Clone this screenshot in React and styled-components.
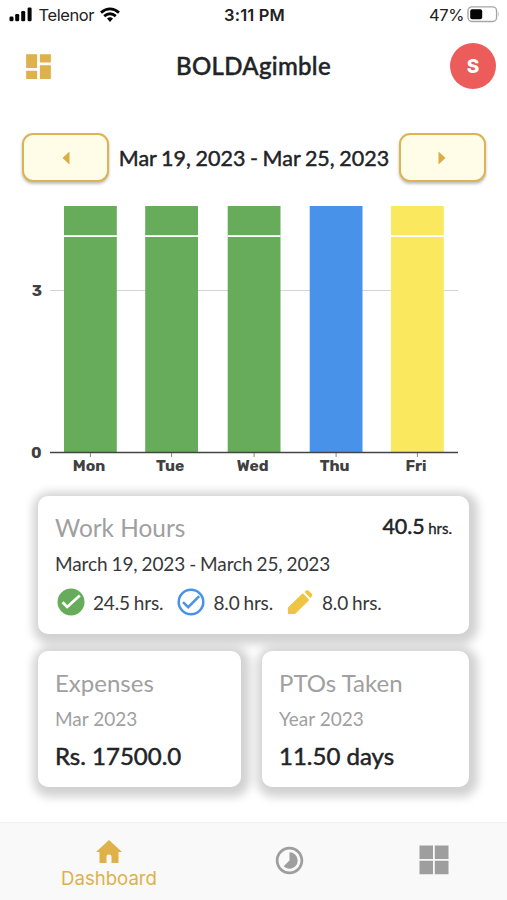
import React from 'react'
import styled, { createGlobalStyle } from "styled-components";
import { MdDashboard, MdTimelapse } from "react-icons/md";

const GlobalStyle = createGlobalStyle`
  * {
    box-sizing: border-box;
  }

  body {
    margin: 0;
    background: white;
    font-family: Lato, "Liberation Sans", sans-serif;
    color: #222326;
  }

  svg {
    display: block;
    flex-shrink: 0;
  }
`;

const Screen = styled.div`
  width: 507px;
  height: 900px;
  display: flex;
  flex-direction: column;
  overflow: hidden;
`;

const StatusBar = styled.div`
  height: 30px;
  padding: 0 7px 0 9px;
  display: grid;
  grid-template-columns: 1fr auto 1fr;
  align-items: center;
  font-family: Inter, sans-serif;
  font-size: 16.5px;
  color: #222;
`;

const StatusGroup = styled.div`
  display: flex;
  align-items: center;
  gap: ${(props) => props.$gap};
  justify-content: ${(props) => (props.$end ? "flex-end" : "flex-start")};
`;

const StatusText = styled.span`
  letter-spacing: -0.4px;
`;

const Clock = styled.span`
  font-weight: 600;
  letter-spacing: 0.15px;
`;

const Header = styled.header`
  height: 72px;
  padding: 0 11px 0 22px;
  display: flex;
  align-items: center;
  justify-content: space-between;
`;

const Title = styled.h1`
  margin: 0 0 0 2px;
  padding-bottom: 1px;
  font-size: 24px;
  font-weight: 500;
  letter-spacing: 0.3px;
  -webkit-text-stroke: 0.45px #222326;
`;

const Avatar = styled.div`
  width: 46px;
  height: 46px;
  border-radius: 50%;
  background: #eb5c5a;
  color: white;
  display: flex;
  align-items: center;
  justify-content: center;
  font-family: Inter, sans-serif;
  font-size: 19px;
  font-weight: 800;
`;

const WeekPicker = styled.div`
  height: 49px;
  margin: 31px 21px 0 22px;
  display: flex;
  align-items: center;
  justify-content: space-between;
`;

const ArrowButton = styled.button`
  width: 87px;
  height: 49px;
  padding: 0;
  border: 2px solid #ddb455;
  border-radius: 11px;
  background: #fffde8;
  box-shadow: 0 2px 3px rgba(0, 0, 0, 0.25);
  display: flex;
  align-items: center;
  justify-content: center;
`;

const WeekRange = styled.div`
  font-size: 21.5px;
  line-height: 24px;
  white-space: nowrap;
  word-spacing: -0.9px;
  -webkit-text-stroke: 0.45px #222326;
`;

const Chart = styled.svg`
  width: 507px;
  height: 298px;
  font-family: Rubik, Inter, sans-serif;
  font-size: 15.6px;
  font-weight: 700;
  fill: #404040;
`;

const Cards = styled.div`
  margin: 16px 38px 0;
  display: grid;
  grid-template-columns: 203px 207px;
  grid-template-rows: 138px 136px;
  gap: 17px 21px;
`;

const Card = styled.section`
  grid-column: ${(props) => (props.$wide ? "1 / -1" : "auto")};
  padding: 16px 17px 0;
  border-radius: 10px;
  background: white;
  box-shadow: 2px 3px 10px 7px rgba(0, 0, 0, 0.18);
`;

const CardTop = styled.div`
  display: flex;
  justify-content: space-between;
`;

const CardTitle = styled.h2`
  margin: 0;
  font-size: ${(props) => props.$size || "24px"};
  line-height: 32px;
  font-weight: 400;
  color: #a0a0a0;
`;

const Total = styled.div`
  font-size: 21.4px;
  line-height: 28px;
  word-spacing: -2px;
  -webkit-text-stroke: 0.5px #222326;
`;

const Unit = styled.span`
  font-size: 15px;
  -webkit-text-stroke: 0.3px #222326;
`;

const Period = styled.div`
  font-size: 19px;
  line-height: 24px;
  margin-top: 8px;
  letter-spacing: ${(props) => (props.$muted ? "0" : "-0.1px")};
  word-spacing: ${(props) => (props.$muted ? "0" : "-0.8px")};
  color: ${(props) => (props.$muted ? "#a0a0a0" : "#38383a")};
`;

const Amount = styled.div`
  margin-top: 9px;
  font-size: 24px;
  line-height: 32px;
  white-space: nowrap;
  -webkit-text-stroke: 0.5px #222326;
`;

const Breakdown = styled.div`
  display: flex;
  margin-top: 10px;
  gap: 12px;
`;

const Hours = styled.div`
  display: flex;
  align-items: center;
  gap: ${(props) => props.$gap || "6px"};
  height: 32px;
  font-size: 19px;
  letter-spacing: -0.15px;
  word-spacing: -0.8px;
  white-space: nowrap;
  color: #38383a;
`;

const TabBar = styled.nav`
  height: 78px;
  margin-top: auto;
  padding: 0 37px;
  border-top: 1px solid #f2f2f2;
  background: #f9f9f9;
  display: grid;
  grid-template-columns: 144px 217px 71px;
`;

const Tab = styled.div`
  display: flex;
  flex-direction: column;
  align-items: center;
  justify-content: center;
  padding-top: ${(props) => (props.$active ? "6px" : "0")};
  padding-bottom: ${(props) => (props.$active ? "0" : "3px")};
  font-family: Inter, sans-serif;
  font-size: 18.6px;
  line-height: 26px;
  color: ${(props) => (props.$active ? "#deb14a" : "#9e9e9e")};
`;

const days = [
  { name: "Mon", x: 64, color: "#67ac5b", split: true },
  { name: "Tue", x: 145.2, color: "#67ac5b", split: true },
  { name: "Wed", x: 227.7, color: "#67ac5b", split: true },
  { name: "Thu", x: 309.7, color: "#4992ea", split: false },
  { name: "Fri", x: 391, color: "#fae95f", split: true },
];

function SignalIcon() {
  return (
    <svg width="24" height="16" viewBox="0 0 24 16" fill="#050505">
      <rect x="0.5" y="9.5" width="4" height="4.7" rx="1.3" />
      <rect x="6.2" y="7" width="4" height="7.2" rx="1.3" />
      <rect x="12.2" y="4" width="4" height="10.2" rx="1.3" />
      <rect x="18.6" y="0.5" width="4" height="13.7" rx="1.3" />
    </svg>
  )
}

function WifiIcon() {
  return (
    <svg width="20" height="16" viewBox="0 0 20 16" fill="none" stroke="#050505" strokeWidth="2.8">
      <path d="M1 5.6Q10-1.9 19 5.6" />
      <path d="M4.2 9.2Q10 4.4 15.8 9.2" />
      <path d="M7 11.6Q10 9 13 11.6L10 15z" fill="#050505" stroke="none" />
    </svg>
  )
}

function BatteryIcon() {
  return (
    <svg width="33" height="18" viewBox="0 0 33 18">
      <rect x="1" y="0.9" width="28.6" height="14.6" rx="4" fill="none" stroke="#a6a6a6" strokeWidth="1.4" />
      <rect x="3.2" y="3.2" width="12" height="10" rx="2" fill="#050505" />
      <path d="M31 5.7q1.6 2.5 0 5z" fill="#a6a6a6" />
    </svg>
  )
}

function Arrow({ right }) {
  return (
    <svg width="8" height="14" viewBox="0 0 8 14" fill="#d9ae43">
      <path d={right ? "M0.5 0.5L7.5 7L0.5 13.5z" : "M7.5 0.5L0.5 7L7.5 13.5z"} />
    </svg>
  )
}

function CheckFilled() {
  return (
    <svg width="32" height="32" viewBox="-16 -16 32 32">
      <circle r="13.5" fill="#67ac5b" />
      <path d="M-8.5 0.3L-3.8 5L8.8-6.6" fill="none" stroke="white" strokeWidth="2.7" />
    </svg>
  )
}

function CheckOutline() {
  return (
    <svg width="32" height="32" viewBox="-16 -16 32 32" fill="none" stroke="#4992ea" strokeWidth="2.5">
      <circle r="12.3" />
      <path d="M-8 0.2L-2.8 5.2L8.2-5.8" />
    </svg>
  )
}

// Tip at the bottom left, eraser cut off at the top right
function Pencil() {
  return (
    <svg width="29" height="32" viewBox="-2 -3 29 32" fill="#f0c443">
      <path d="M0.9 18.6L15.2 4.8Q15.8 4.2 16.4 4.8L21.8 10.4Q22.4 11 21.8 11.6L8 25.1H2.1Q0.9 25.1 0.9 23.9z" />
      <path d="M17.5 3.1L19.2 1.6Q20.3 0.7 21.5 1.6L24.8 4.7Q25.8 5.9 25 7.1L23.6 9.2z" />
    </svg>
  )
}

function HoursChart() {
  return (
    <Chart viewBox="0 182 507 298">
      <path d="M50 290.5H458" stroke="#d5d5d5" />
      {days.map((day) => (
        <g key={day.name}>
          <rect x={day.x} y="206" width="52.8" height="246" fill={day.color} />
          {day.split && <rect x={day.x} y="235.2" width="52.8" height="1.8" fill="white" />}
          <path d={`M${day.x + 26.4} 453v4`} stroke="#888" />
          <text x={day.x + 25} y="471.3" textAnchor="middle">{day.name}</text>
        </g>
      ))}
      <path d="M50 452.5H458" stroke="#444" strokeWidth="1.3" />
      <text x="42" y="296.2" textAnchor="end">3</text>
      <text x="41.5" y="458" textAnchor="end">0</text>
    </Chart>
  )
}

function App() {
  return (
    <Screen>
      <GlobalStyle />
      <StatusBar>
        <StatusGroup $gap="5.5px">
          <SignalIcon />
          <StatusText>Telenor</StatusText>
          <WifiIcon />
        </StatusGroup>
        <Clock>3:11 PM</Clock>
        <StatusGroup $gap="3px" $end>
          <StatusText>47%</StatusText>
          <BatteryIcon />
        </StatusGroup>
      </StatusBar>

      <Header>
        <MdDashboard size={33} color="#deb14a" />
        <Title>BOLDAgimble</Title>
        <Avatar>S</Avatar>
      </Header>

      <WeekPicker>
        <ArrowButton><Arrow /></ArrowButton>
        <WeekRange>Mar 19, 2023 - Mar 25, 2023</WeekRange>
        <ArrowButton><Arrow right /></ArrowButton>
      </WeekPicker>

      <HoursChart />

      <Cards>
        <Card $wide>
          <CardTop>
            <CardTitle $size="24.4px">Work Hours</CardTitle>
            <Total>40.5 <Unit>hrs.</Unit></Total>
          </CardTop>
          <Period>March 19, 2023 - March 25, 2023</Period>
          <Breakdown>
            <Hours><CheckFilled />24.5 hrs.</Hours>
            <Hours><CheckOutline />8.0 hrs.</Hours>
            <Hours $gap="8px"><Pencil />8.0 hrs.</Hours>
          </Breakdown>
        </Card>
        <Card>
          <CardTitle>Expenses</CardTitle>
          <Period $muted>Mar 2023</Period>
          <Amount>Rs. 17500.0</Amount>
        </Card>
        <Card>
          <CardTitle>PTOs Taken</CardTitle>
          <Period $muted>Year 2023</Period>
          <Amount>11.50 days</Amount>
        </Card>
      </Cards>

      <TabBar>
        <Tab $active>
          <svg width="28" height="26" viewBox="0 0 28 26" fill="currentColor">
            <path d="M14 1L27 13H23.5V24H16.5V17.5Q16.5 15.5 14 15.5T11.5 17.5V24H4.5V13H1z" />
          </svg>
          Dashboard
        </Tab>
        <Tab><MdTimelapse size={33} /></Tab>
        <Tab>
          <svg width="30" height="30" viewBox="0 0 30 30" fill="currentColor">
            <path d="M0.5 0.5H14V14H0.5zM15.8 0.5H29.5V14H15.8zM0.5 15.8H14V29.3H0.5zM15.8 15.8H29.5V29.3H15.8z" />
          </svg>
        </Tab>
      </TabBar>
    </Screen>
  )
}

export default App
